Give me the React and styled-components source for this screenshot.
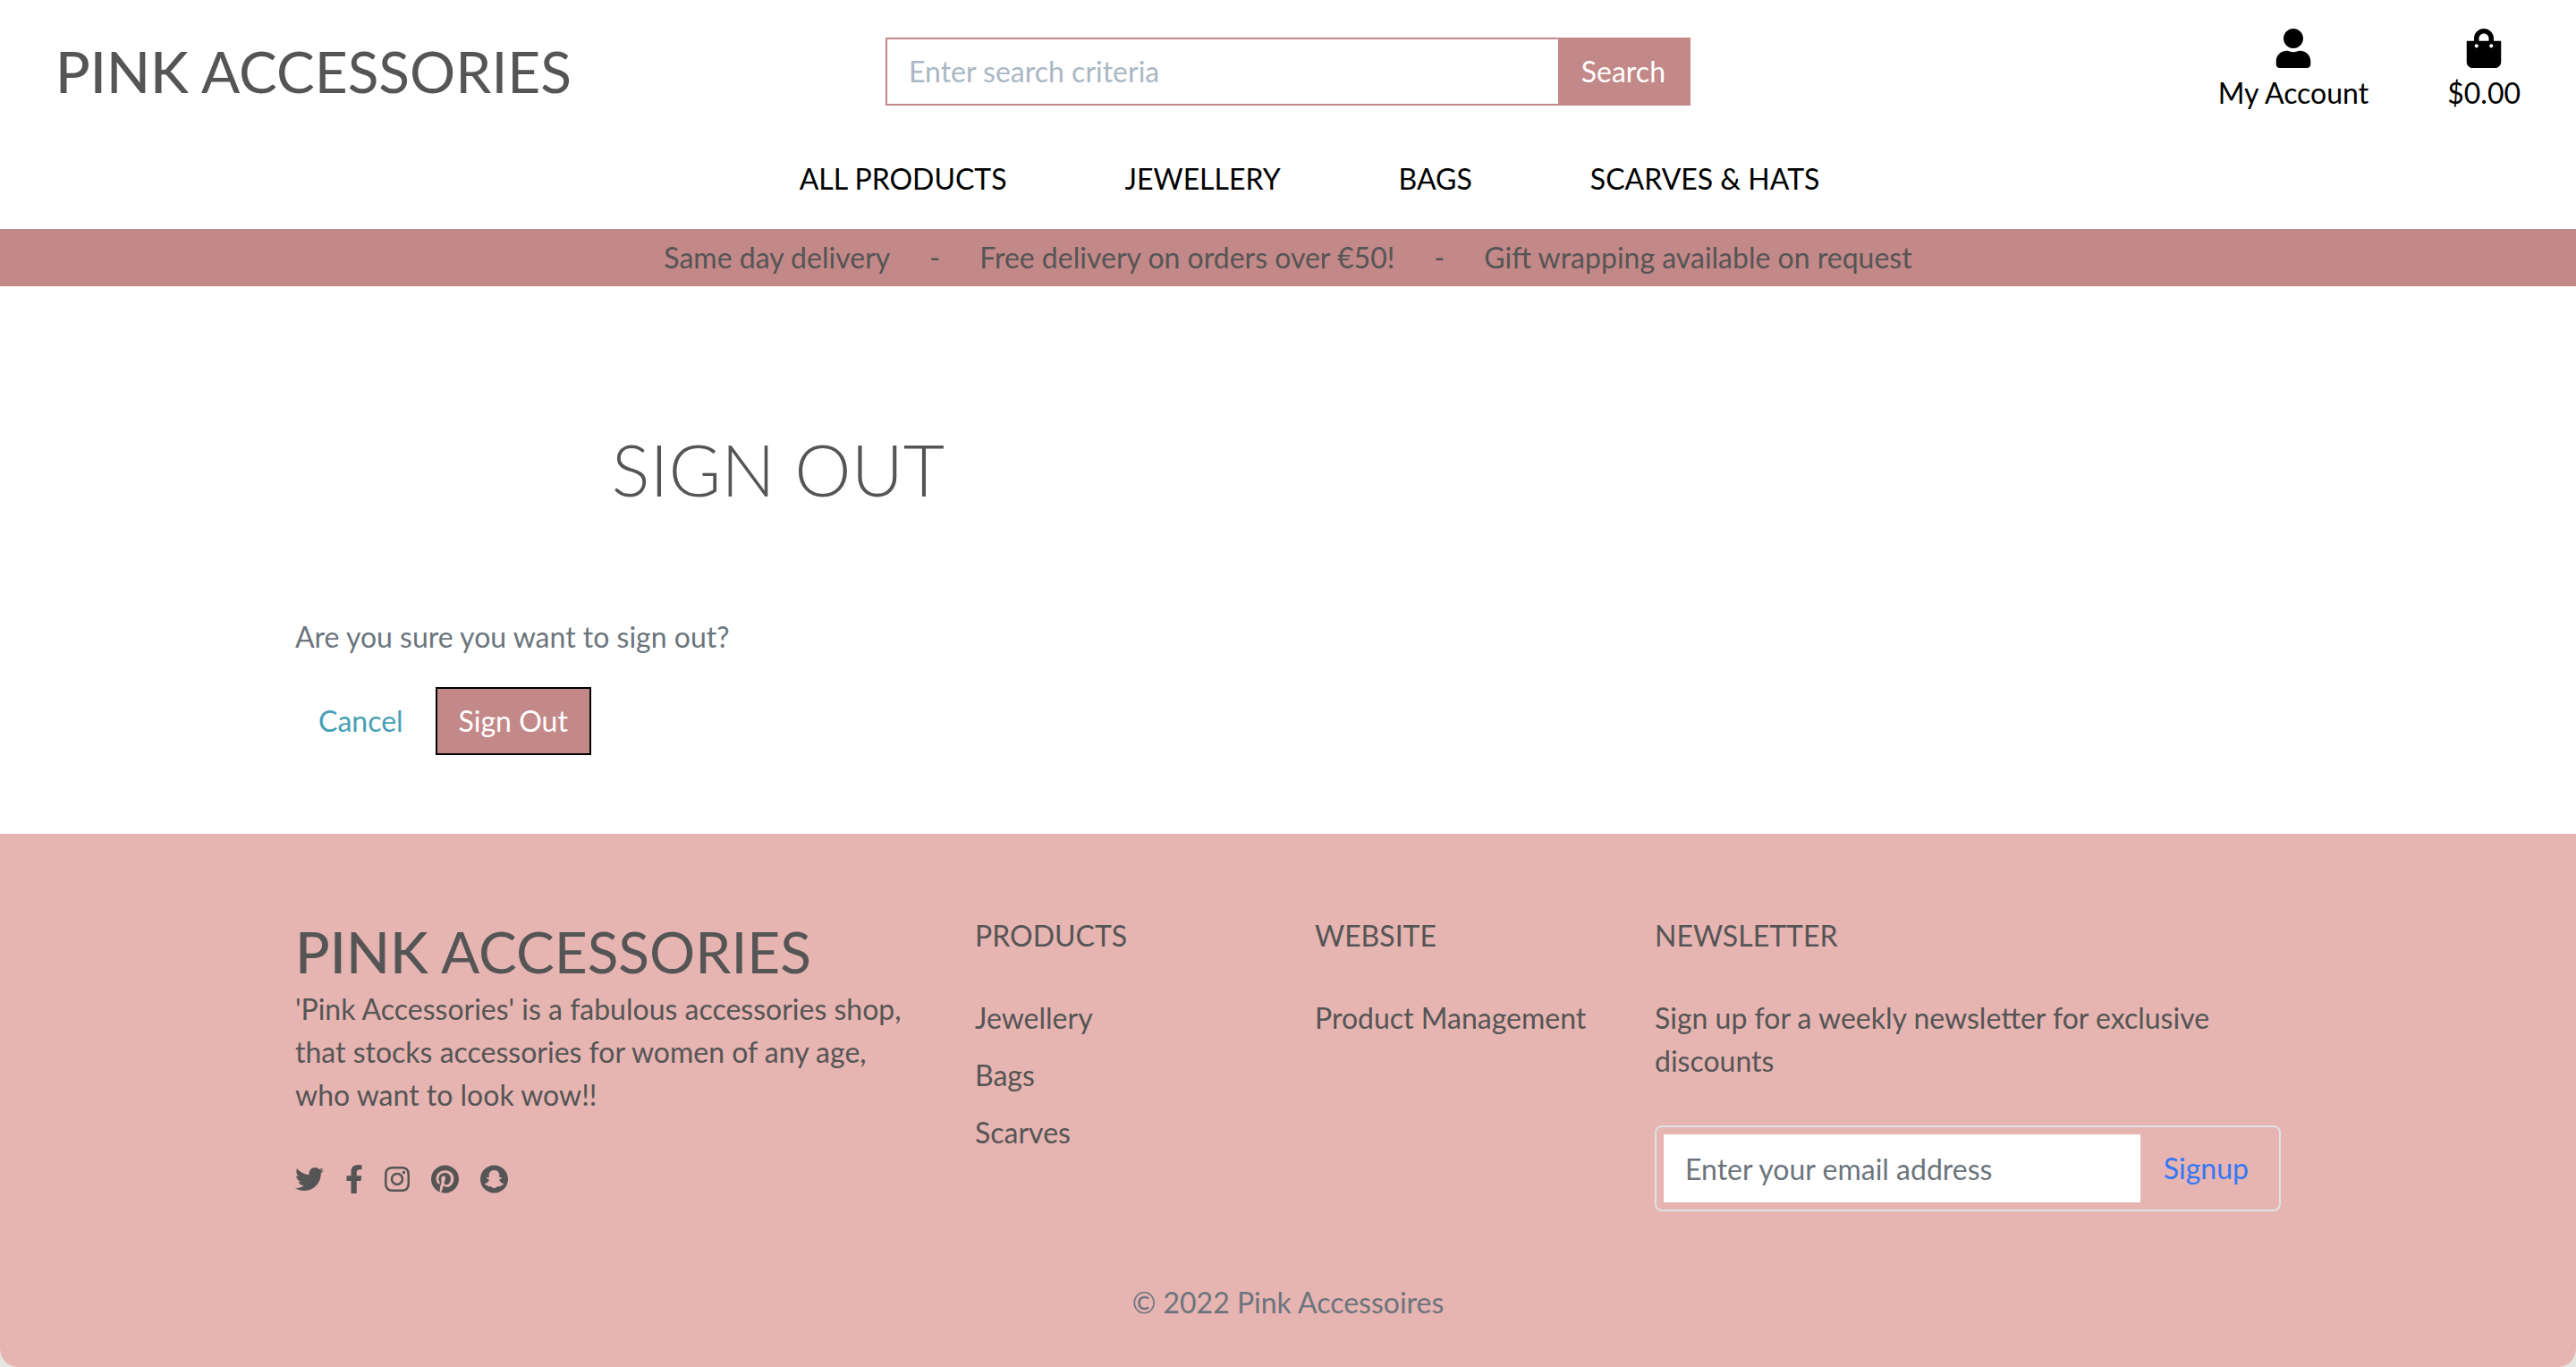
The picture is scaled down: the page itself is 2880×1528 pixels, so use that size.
import React from 'react';
import styled, { createGlobalStyle } from 'styled-components';
import {
  FaUser,
  FaShoppingBag,
  FaTwitter,
  FaFacebookF,
  FaInstagram,
  FaPinterest,
  FaSnapchat,
} from 'react-icons/fa';

const rose = '#c38888';
const blush = '#e6b4b1';
const ink = '#555555';
const muted = '#6c757d';

const GlobalStyle = createGlobalStyle`
  *, *::before, *::after { box-sizing: border-box; }
  html { background: #e6e6e1; }
  body {
    margin: 0;
    font: 400 32px/48px Lato, "Open Sans", sans-serif;
    color: ${ink};
  }
  a { color: inherit; text-decoration: none; }
  h1, h2, p, ul { margin: 0; padding: 0; font-weight: inherit; }
  ul { list-style: none; }
  input, button {
    margin: 0;
    border: 0;
    border-radius: 0;
    font: inherit;
  }
  button { cursor: pointer; }
`;

const Page = styled.div`
  min-height: 100vh;
  display: flex;
  flex-direction: column;
  background: #ffffff;
  border-radius: 0 0 20px 20px;
  overflow: hidden;
`;

const Header = styled.header`
  display: grid;
  grid-template-columns: 1fr minmax(0, 900px) 1fr;
  align-items: center;
  padding: 32px 62px 0;
`;

const Logo = styled.a`
  display: block;
  font-size: 64px;
  line-height: 80px;
  white-space: nowrap;
  font-weight: 400;

  strong { font-weight: 500; }
`;

const SearchForm = styled.form`
  display: flex;
  height: 76px;
  border: 2px solid ${rose};
`;

const SearchInput = styled.input`
  flex: 1;
  min-width: 0;
  padding: 0 24px;
  background: #ffffff;
  color: ${ink};

  &::placeholder { color: #aab7c4; opacity: 1; }
`;

const SearchButton = styled.button`
  padding: 0 26px;
  background: ${rose};
  color: #ffffff;
`;

const UserLinks = styled.ul`
  display: flex;
  justify-content: flex-end;
  gap: 88px;
`;

const UserLink = styled.a`
  display: flex;
  flex-direction: column;
  align-items: center;
  color: #000000;

  svg { width: auto; height: 44px; margin-bottom: 4px; }
`;

const Nav = styled.nav`
  display: flex;
  justify-content: center;
  gap: 132px;
  padding: 48px 0 32px 48px;
  color: #000000;
`;

const Banner = styled.ul`
  display: flex;
  justify-content: center;
  gap: 44px;
  padding: 8px 0;
  background: ${rose};
`;

const Container = styled.div`
  width: 100%;
  max-width: 2280px;
  margin: 0 auto;
  padding: 0 30px;
`;

const Main = styled.main`
  padding: 156px 0 88px;
`;

const Title = styled.h1`
  width: 50%;
  margin-bottom: 116px;
  padding-right: 30px;
  text-align: center;
  font-size: 80px;
  line-height: 96px;
  font-weight: 300;
`;

const Question = styled.p`
  margin-bottom: 32px;
  color: ${muted};
`;

const Actions = styled.form`
  display: flex;
  gap: 10px;
`;

const CancelLink = styled.a`
  padding: 14px 26px;
  color: #479fb6;
`;

const SignOutButton = styled.button`
  height: 76px;
  padding: 0 24px;
  border: 2px solid #000000;
  background: ${rose};
  color: #ffffff;
`;

const Footer = styled.footer`
  flex: 1;
  padding: 90px 0 40px;
  background: ${blush};
`;

const FooterColumns = styled.div`
  display: grid;
  grid-template-columns: 2fr 1fr 1fr 2fr;
  margin: 0 -30px;
`;

const Column = styled.section`
  min-width: 0;
  padding: 0 30px;
`;

const About = styled(Column)`
  padding-top: 2px;
`;

const Social = styled.ul`
  display: flex;
  gap: 24px;
  padding-top: 54px;
`;

const SocialItem = styled.li`
  width: ${(props) => props.$width}px;

  a { display: block; }
  svg { display: block; width: 100%; height: 32px; }
`;

const ColumnTitle = styled.h2`
  margin-bottom: 44px;
  font-size: 32px;
  line-height: 48px;
`;

const LinkList = styled.ul`
  display: grid;
  gap: 16px;
  white-space: nowrap;
`;

const Newsletter = styled.form`
  display: flex;
  margin-top: 48px;
  padding: 8px;
  border: 2px solid #dee2e6;
  border-radius: 8px;
`;

const EmailInput = styled.input`
  flex: 1;
  min-width: 0;
  height: 76px;
  padding: 0 24px;
  background: #ffffff;
  color: ${ink};

  &::placeholder { color: ${muted}; opacity: 1; }
`;

const SignupButton = styled.button`
  padding: 0 26px;
  background: transparent;
  color: #3478f6;
`;

const Copyright = styled.p`
  margin-top: 78px;
  text-align: center;
  color: ${muted};
`;

const navItems = ['ALL PRODUCTS', 'JEWELLERY', 'BAGS', 'SCARVES & HATS'];
const notices = [
  'Same day delivery',
  '-',
  'Free delivery on orders over €50!',
  '-',
  'Gift wrapping available on request',
];
const social = [
  { name: 'Twitter', Icon: FaTwitter, width: 32 },
  { name: 'Facebook', Icon: FaFacebookF, width: 20 },
  { name: 'Instagram', Icon: FaInstagram, width: 28 },
  { name: 'Pinterest', Icon: FaPinterest, width: 31 },
  { name: 'Snapchat', Icon: FaSnapchat, width: 31 },
];

const stop = (event) => event.preventDefault();

function Brand() {
  return (
    <Logo href="#home">
      <strong>PINK</strong> ACCESSORIES
    </Logo>
  );
}

function FooterLinks({ title, items }) {
  return (
    <Column>
      <ColumnTitle>{title}</ColumnTitle>
      <LinkList>
        {items.map((item) => (
          <li key={item}>
            <a href="#products">{item}</a>
          </li>
        ))}
      </LinkList>
    </Column>
  );
}

export default function App() {
  return (
    <>
      <GlobalStyle />
      <Page>
        <Header>
          <Brand />
          <SearchForm role="search" onSubmit={stop}>
            <SearchInput
              type="text"
              aria-label="Enter search criteria"
              placeholder="Enter search criteria"
            />
            <SearchButton type="submit">Search</SearchButton>
          </SearchForm>
          <UserLinks>
            <li>
              <UserLink href="#account">
                <FaUser aria-hidden="true" />
                My Account
              </UserLink>
            </li>
            <li>
              <UserLink href="#bag">
                <FaShoppingBag aria-hidden="true" />
                $0.00
              </UserLink>
            </li>
          </UserLinks>
        </Header>
        <Nav>
          {navItems.map((item) => (
            <a key={item} href="#products">
              {item}
            </a>
          ))}
        </Nav>
        <Banner>
          {notices.map((notice, index) => (
            <li key={index}>{notice}</li>
          ))}
        </Banner>
        <Main>
          <Container>
            <Title>SIGN OUT</Title>
            <Question>Are you sure you want to sign out?</Question>
            <Actions onSubmit={stop}>
              <CancelLink href="#home">Cancel</CancelLink>
              <SignOutButton type="submit">Sign Out</SignOutButton>
            </Actions>
          </Container>
        </Main>
        <Footer>
          <Container>
            <FooterColumns>
              <About>
                <Brand />
                <p>
                  'Pink Accessories' is a fabulous accessories shop, that stocks
                  accessories for women of any age, who want to look wow!!
                </p>
                <Social>
                  {social.map(({ name, Icon, width }) => (
                    <SocialItem key={name} $width={width}>
                      <a href="#social" aria-label={name}>
                        <Icon aria-hidden="true" />
                      </a>
                    </SocialItem>
                  ))}
                </Social>
              </About>
              <FooterLinks title="PRODUCTS" items={['Jewellery', 'Bags', 'Scarves']} />
              <FooterLinks title="WEBSITE" items={['Product Management']} />
              <Column>
                <ColumnTitle>NEWSLETTER</ColumnTitle>
                <p>Sign up for a weekly newsletter for exclusive discounts</p>
                <Newsletter onSubmit={stop}>
                  <EmailInput
                    type="email"
                    aria-label="Enter your email address"
                    placeholder="Enter your email address"
                  />
                  <SignupButton type="submit">Signup</SignupButton>
                </Newsletter>
              </Column>
            </FooterColumns>
            <Copyright>© 2022 Pink Accessoires</Copyright>
          </Container>
        </Footer>
      </Page>
    </>
  );
}
